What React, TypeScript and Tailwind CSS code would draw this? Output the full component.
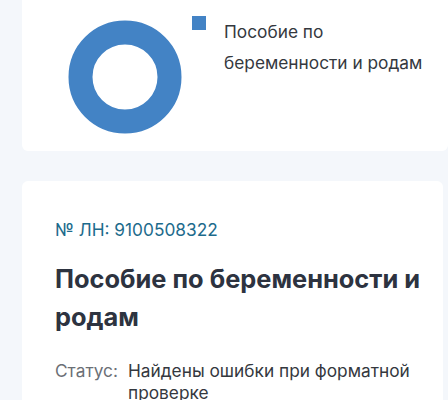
import React from "react";

function Donut() {
  return (
    <svg width="114" height="114" viewBox="0 0 114 114">
      <circle cx="57" cy="57" r="44.5" fill="none" stroke="#4383c5" strokeWidth="24" />
    </svg>
  );
}

export default function App() {
  return (
    <div
      className="h-[400px] w-[448px] overflow-hidden bg-[#f4f7fb] pl-[22px]"
      style={{ fontFamily: "Inter, 'Noto Sans', sans-serif" }}
    >
      <div className="flex h-[151px] rounded-b-md bg-white pl-[46px]">
        <div className="pt-[20px]">
          <Donut />
        </div>
        <div className="ml-[10px] flex pt-[16px]">
          <div className="h-[14px] w-[14px] bg-[#4383c5]" />
          <div className="ml-[18px] mt-0 text-[17.3px] leading-[31px] text-[#34383e]">
            Пособие по
            <br />
            беременности и родам
          </div>
        </div>
      </div>

      <div className="mt-[30px] mr-[5px] rounded-md bg-white pl-[33px] pr-[18px] pt-[37px] pb-6">
        <div className="text-[17.3px] leading-[24px] text-[#1d6b8c]">№ ЛН: 9100508322</div>
        <div className="mt-[18px] text-[25.4px] font-bold leading-[38px] text-[#2d3340]">
          Пособие по беременности и родам
        </div>
        <div className="mt-[24px] flex text-[17.3px] leading-[22px]">
          <span className="w-[73px] shrink-0 text-[#6b6f76]">Статус:</span>
          <span className="pr-[8px] text-[#34383e]">Найдены ошибки при форматной проверке</span>
        </div>
      </div>
    </div>
  );
}
